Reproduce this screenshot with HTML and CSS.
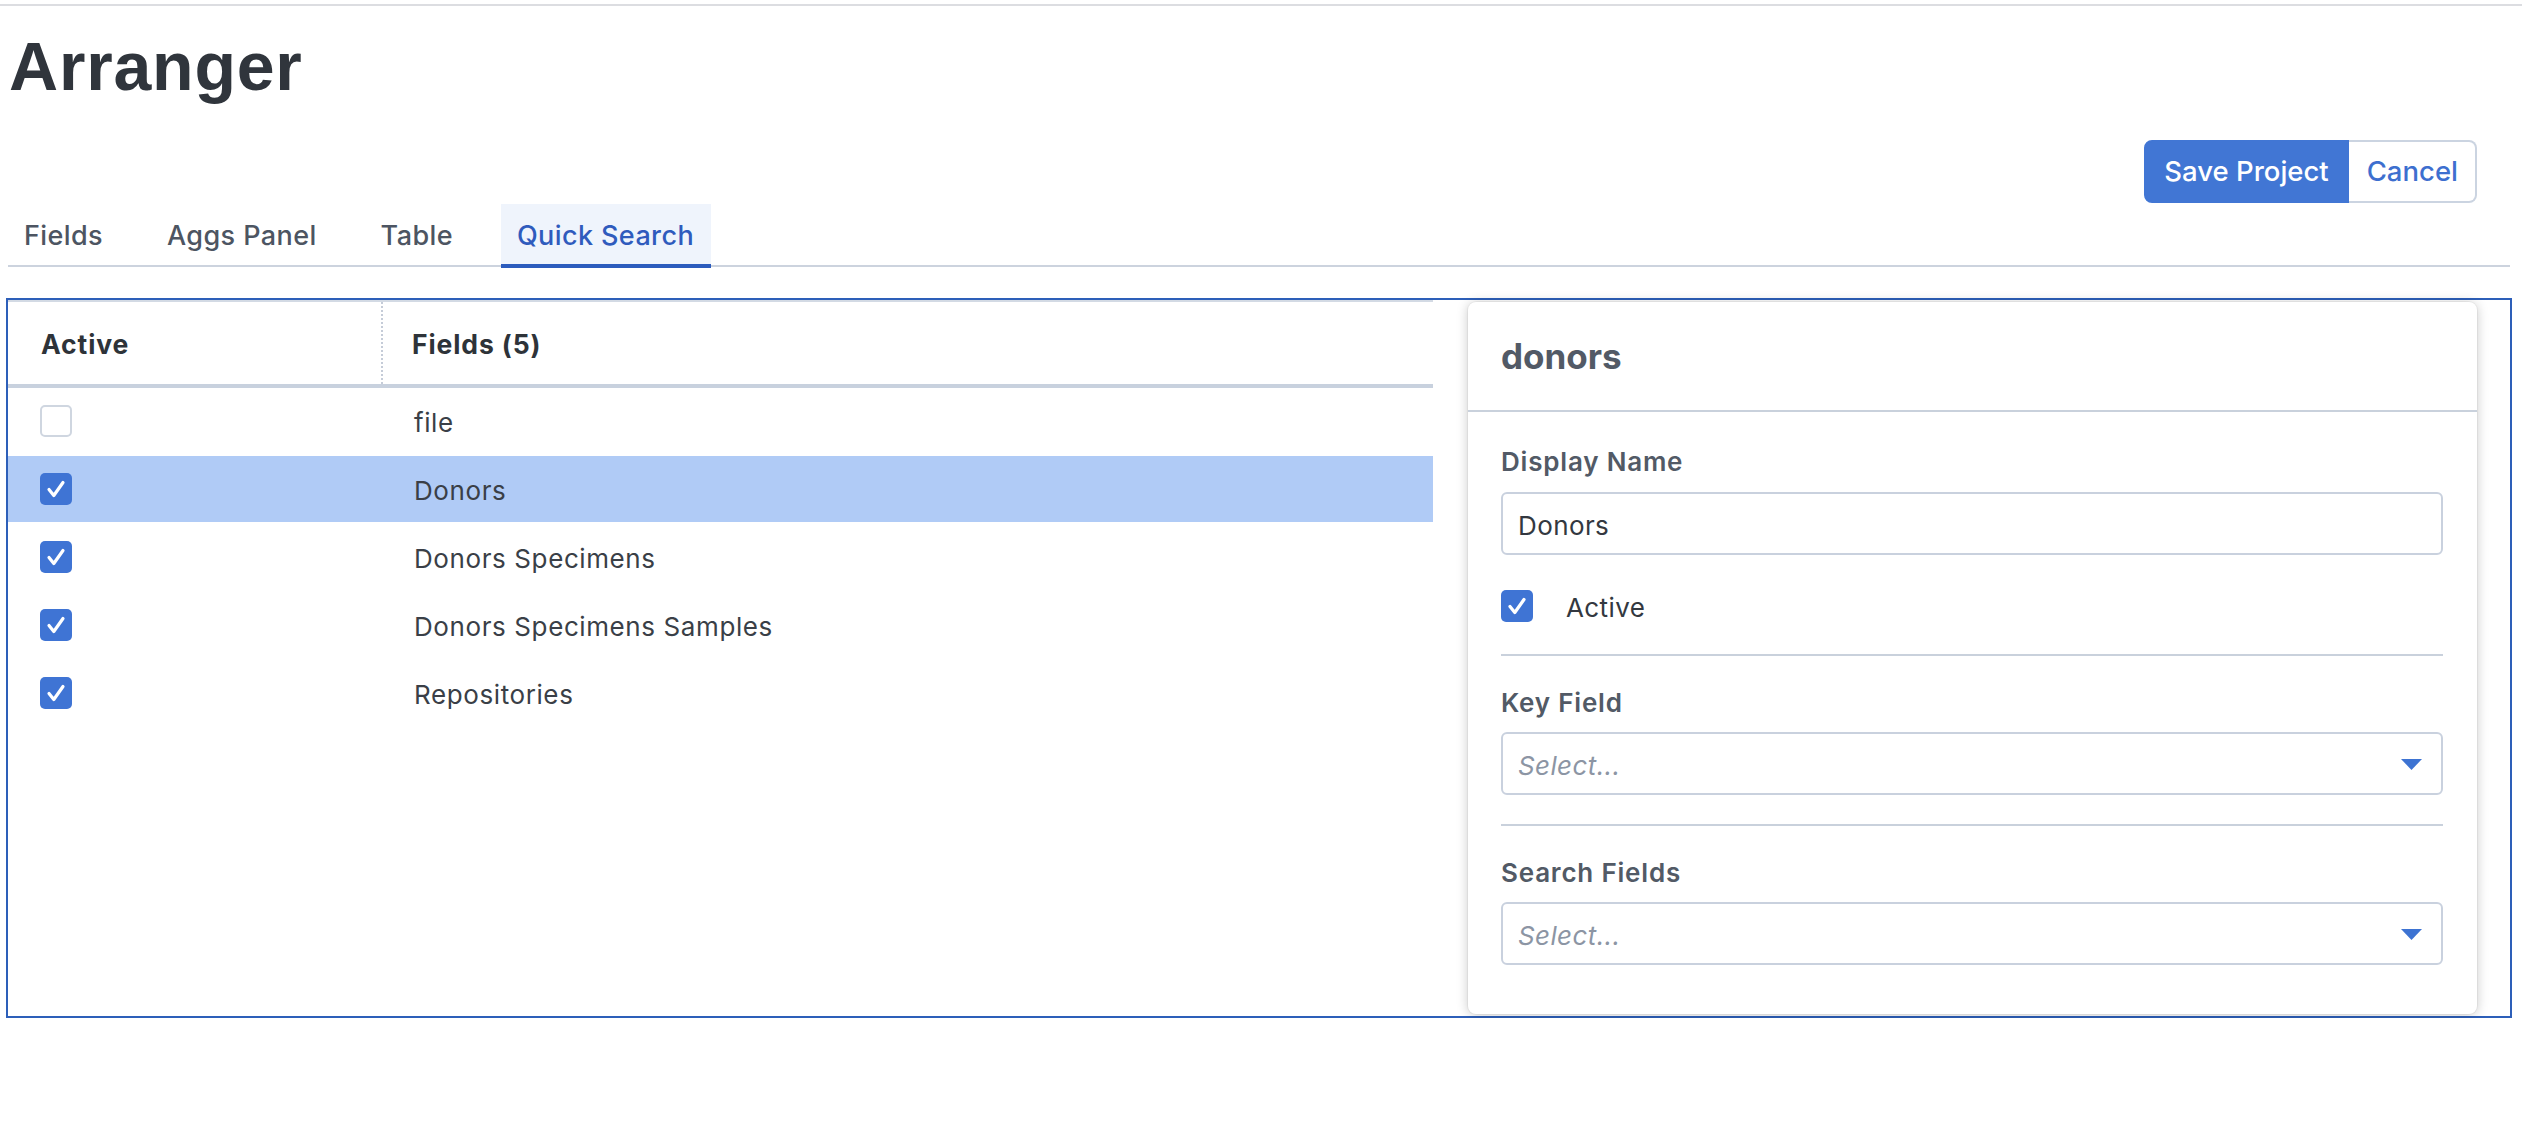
FILE: index.html
```html
<!DOCTYPE html>
<html lang="en">
<head>
<meta charset="utf-8">
<title>Arranger</title>
<link rel="stylesheet" href="styles.css">
</head>
<body>
<div class="top-rule"></div>
<div class="page">
  <h1 class="title">Arranger</h1>
  <div class="actions">
    <button class="btn btn-primary">Save Project</button>
    <button class="btn btn-secondary">Cancel</button>
  </div>
  <nav class="tabs">
    <div class="tab">Fields</div>
    <div class="tab">Aggs Panel</div>
    <div class="tab">Table</div>
    <div class="tab tab-active">Quick Search</div>
  </nav>
  <section class="panel">
    <div class="table">
      <div class="thead">
        <div class="th th-active">Active</div>
        <div class="th th-fields">Fields (5)</div>
      </div>
      <div class="row">
        <div class="cell cell-check"><span class="cbox"></span></div>
        <div class="cell cell-name">file</div>
      </div>
      <div class="row row-selected">
        <div class="cell cell-check"><span class="cbox cbox-on"><svg viewBox="0 0 32 32" width="32" height="32"><path d="M9 16.5 L13.8 22.5 L23 9.5" fill="none" stroke="#fff" stroke-width="3.2" stroke-linecap="round" stroke-linejoin="round"/></svg></span></div>
        <div class="cell cell-name">Donors</div>
      </div>
      <div class="row">
        <div class="cell cell-check"><span class="cbox cbox-on"><svg viewBox="0 0 32 32" width="32" height="32"><path d="M9 16.5 L13.8 22.5 L23 9.5" fill="none" stroke="#fff" stroke-width="3.2" stroke-linecap="round" stroke-linejoin="round"/></svg></span></div>
        <div class="cell cell-name">Donors Specimens</div>
      </div>
      <div class="row">
        <div class="cell cell-check"><span class="cbox cbox-on"><svg viewBox="0 0 32 32" width="32" height="32"><path d="M9 16.5 L13.8 22.5 L23 9.5" fill="none" stroke="#fff" stroke-width="3.2" stroke-linecap="round" stroke-linejoin="round"/></svg></span></div>
        <div class="cell cell-name">Donors Specimens Samples</div>
      </div>
      <div class="row">
        <div class="cell cell-check"><span class="cbox cbox-on"><svg viewBox="0 0 32 32" width="32" height="32"><path d="M9 16.5 L13.8 22.5 L23 9.5" fill="none" stroke="#fff" stroke-width="3.2" stroke-linecap="round" stroke-linejoin="round"/></svg></span></div>
        <div class="cell cell-name">Repositories</div>
      </div>
    </div>
    <aside class="card">
      <div class="card-title">donors</div>
      <div class="card-body">
        <div class="label">Display Name</div>
        <div class="input">Donors</div>
        <div class="check-row">
          <span class="cbox cbox-on"><svg viewBox="0 0 32 32" width="32" height="32"><path d="M9 16.5 L13.8 22.5 L23 9.5" fill="none" stroke="#fff" stroke-width="3.2" stroke-linecap="round" stroke-linejoin="round"/></svg></span>
          <span class="check-label">Active</span>
        </div>
        <div class="divider"></div>
        <div class="label label-spaced">Key Field</div>
        <div class="select">
          <span class="placeholder">Select...</span>
          <svg class="caret" viewBox="0 0 21 11" width="21" height="11"><polygon points="0,0 21,0 10.5,11" fill="#3d73d2"/></svg>
        </div>
        <div class="divider divider-lower"></div>
        <div class="label label-spaced">Search Fields</div>
        <div class="select">
          <span class="placeholder">Select...</span>
          <svg class="caret" viewBox="0 0 21 11" width="21" height="11"><polygon points="0,0 21,0 10.5,11" fill="#3d73d2"/></svg>
        </div>
      </div>
    </aside>
  </section>
</div>
</body>
</html>
```
FILE: styles.css
```css
* { box-sizing: border-box; }

html, body {
  margin: 0;
  padding: 0;
  background: #ffffff;
}

body {
  font-family: Inter, "Noto Sans", sans-serif;
  color: #3a3f47;
}

.top-rule {
  margin-top: 4px;
  height: 2px;
  background: #dcdde1;
}

.page {
  padding: 0 10px 0 6px;
}

.title {
  margin: 26px 0 0 3px;
  font-family: "Liberation Sans", Arial, sans-serif;
  font-weight: 700;
  font-size: 68px;
  line-height: 68px;
  letter-spacing: 0.8px;
  color: #30353c;
}

.actions {
  margin: 40px 35px 0 0;
  display: flex;
  justify-content: flex-end;
}

.btn {
  height: 63px;
  padding: 0 18px;
  font-family: Inter, "Noto Sans", sans-serif;
  font-size: 27.5px;
  font-weight: 500;
  line-height: 59px;
  cursor: pointer;
}

.btn-primary {
  background: #4176d4;
  color: #ffffff;
  border: 2px solid #4176d4;
  border-radius: 8px 0 0 8px;
}

.btn-secondary {
  background: #ffffff;
  color: #3d6fcf;
  border: 2px solid #cbd4e1;
  border-left: none;
  border-radius: 0 8px 8px 0;
  padding: 0 17px 0 18px;
}

.tabs {
  margin: 1px 2px 0 2px;
  display: flex;
  gap: 31px;
  border-bottom: 2px solid #ccd3de;
}

.tab {
  padding: 4px 17px 0 16px;
  line-height: 56px;
  font-size: 27px;
  font-weight: 500;
  letter-spacing: 0.4px;
  color: #4d5562;
  border-bottom: 4px solid transparent;
  margin-bottom: -3px;
}

.tab-active {
  background: #eff4fc;
  color: #2f5bbd;
  border-bottom-color: #2c5cbd;
}

.panel {
  margin-top: 31px;
  border: 2px solid #2d5fb9;
  display: flex;
  align-items: flex-start;
}

.table {
  flex: 1;
  border-top: 2px solid #d3dae4;
}

.thead {
  display: grid;
  grid-template-columns: 375px 1fr;
  border-bottom: 4px solid #c8d1de;
}

.th {
  padding-top: 2px;
  line-height: 80px;
  font-size: 26.5px;
  font-weight: 700;
  letter-spacing: 0.9px;
  color: #2e3339;
}

.th-active {
  padding-left: 33px;
  border-right: 2px dotted #c5ccd8;
}

.th-fields {
  padding-left: 29px;
}

.row {
  display: grid;
  grid-template-columns: 375px 1fr;
  height: 66px;
  margin-bottom: 2px;
  align-items: center;
}

.row-selected {
  background: #b0cbf6;
}

.cell-check {
  padding-left: 32px;
  display: flex;
  align-items: center;
}

.cell-name {
  padding-left: 31px;
  font-size: 26px;
  letter-spacing: 0.6px;
  color: #3a3f47;
  padding-top: 2px;
}

.cbox {
  display: block;
  width: 32px;
  height: 32px;
  border-radius: 5px;
  background: #ffffff;
  border: 2px solid #cfd6e0;
  flex: none;
}

.cbox-on {
  background: #3f74d4;
  border: none;
}

.cbox svg {
  display: block;
}

.card {
  flex: 0 0 1009px;
  margin: 2px 33px 2px 35px;
  background: #ffffff;
  border-radius: 8px;
  box-shadow: 0 0 0 1px rgba(0, 0, 0, 0.04), 0 1px 12px rgba(0, 0, 0, 0.22);
}

.card-title {
  height: 110px;
  padding-left: 33px;
  line-height: 108px;
  font-size: 35px;
  font-weight: 700;
  color: #525a66;
  border-bottom: 2px solid #c9d1dc;
}

.card-body {
  padding: 34px 34px 49px 33px;
}

.label {
  line-height: 32px;
  font-size: 26px;
  font-weight: 600;
  letter-spacing: 0.8px;
  color: #525a66;
}

.label-spaced {
  margin-top: 31px;
}

.input,
.select {
  margin-top: 14px;
  height: 63px;
  border: 2px solid #c9d1de;
  border-radius: 6px;
  padding: 5px 19px 0 15px;
  line-height: 54px;
  font-size: 26px;
  letter-spacing: 0.4px;
  color: #333840;
}

.select {
  margin-top: 13px;
  display: flex;
  align-items: center;
  justify-content: space-between;
  padding-top: 0;
}

.placeholder {
  font-style: italic;
  color: #8c95a4;
  padding-top: 5px;
  line-height: 54px;
}

.caret {
  display: block;
  margin-top: 2px;
}

.check-row {
  margin-top: 35px;
  display: flex;
  align-items: center;
  gap: 33px;
  height: 32px;
}

.check-label {
  font-size: 26px;
  letter-spacing: 0.4px;
  color: #333840;
  padding-top: 2px;
}

.divider {
  margin-top: 32px;
  height: 2px;
  background: #c9d1dc;
}

.divider-lower {
  margin-top: 29px;
}
```
